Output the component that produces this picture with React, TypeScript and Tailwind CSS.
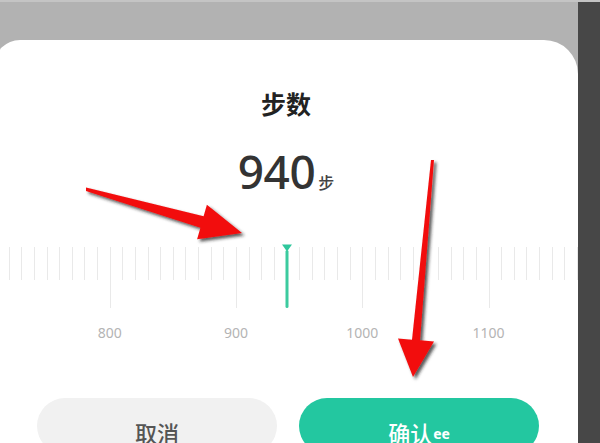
import React from 'react'

const FONT = '"Noto Sans", "Noto Sans CJK SC", sans-serif'

// ruler: value 900 sits at x=236, 10 units per tick, 12.63px per tick
const PX_PER_UNIT = 1.263
const xOf = (v: number) => 236 + (v - 900) * PX_PER_UNIT

const ticks: number[] = []
for (let v = 720; v <= 1170; v += 10) ticks.push(v)
const labels = [800, 900, 1000, 1100]

function Arrows() {
  return (
    <svg className="pointer-events-none absolute inset-0" width="600" height="443" viewBox="0 0 600 443">
      <defs>
        <filter id="sh" x="-20%" y="-20%" width="140%" height="140%">
          <feDropShadow dx="2.5" dy="2.5" stdDeviation="1.6" floodColor="#222" floodOpacity="0.75" />
        </filter>
      </defs>
      <polygon
        filter="url(#sh)"
        fill="#f20d0d"
        points="86,187.5 203.6,216.2 206.9,204.7 242,233 197.1,239.3 200.4,227.8 86,191"
      />
      <polygon
        filter="url(#sh)"
        fill="#f20d0d"
        points="431,160 434,160 420,340.3 434,341.6 413,377 398,338.4 412,339.7"
      />
    </svg>
  )
}

function Ruler() {
  return (
    <div className="relative h-[110px] w-full">
      {ticks.map((v) => (
        <div
          key={v}
          className={`absolute top-[7px] w-px bg-[#e9e9e9] ${v % 100 === 0 ? 'h-[61px]' : 'h-[33px]'}`}
          style={{ left: xOf(v) }}
        />
      ))}
      {labels.map((v) => (
        <div
          key={v}
          className="absolute top-[84px] w-[60px] -translate-x-1/2 text-center text-[14px] leading-[18px] text-[#b4b4b4]"
          style={{ left: xOf(v) }}
        >
          {v}
        </div>
      ))}
      {/* pointer at 940 */}
      <div className="absolute top-[4px] flex -translate-x-1/2 flex-col items-center" style={{ left: xOf(940) + 0.5 }}>
        <svg width="11" height="8" viewBox="0 0 11 8">
          <path d="M0.5 0.5 H10.5 L5.5 7.5 Z" fill="#2fc79c" strokeLinejoin="round" />
        </svg>
        <div className="-mt-[2px] h-[58px] w-[3px] rounded-full bg-[#3ccb9f]" />
      </div>
    </div>
  )
}

export default function App() {
  return (
    <div className="relative flex h-[443px] w-[600px] overflow-hidden bg-[#b2b2b2]" style={{ fontFamily: FONT }}>
      <div className="absolute left-0 right-0 top-0 h-[2px] bg-[#c4c4c4]" />
      <div className="flex flex-1 flex-col pt-[40px]">
        <div className="-ml-[6px] flex flex-1 flex-col items-center rounded-tl-[26px] rounded-tr-[34px] bg-white pt-[48px]">
          <div className="text-[25px] font-semibold leading-[32px] text-[#222]">步数</div>
          <div className="mt-[25px] flex items-baseline">
            <span className="text-[46px] font-medium leading-[52px] tracking-[-0.5px] text-[#333]">940</span>
            <span className="ml-[3px] text-[16px] font-medium text-[#444]">步</span>
          </div>
          <div className="mt-[43px] w-full pl-[6px]">
            <Ruler />
          </div>
          <div className="mt-[48px] flex w-full gap-[22px] pl-[43px] pr-[39px]">
            <div className="flex h-[56px] flex-1 items-center justify-center rounded-full bg-[#f1f1f1] pt-[14px] text-[22px] font-medium text-[#555]">
              取消
            </div>
            <div className="flex h-[56px] flex-1 items-center justify-center rounded-full bg-[#23c7a0] pt-[14px] text-[22px] font-medium text-white">
              确认<span className="ml-[1px] text-[14px] font-bold">ee</span>
            </div>
          </div>
        </div>
      </div>
      <div className="w-[22px] bg-[#474747]" />
      <Arrows />
    </div>
  )
}
